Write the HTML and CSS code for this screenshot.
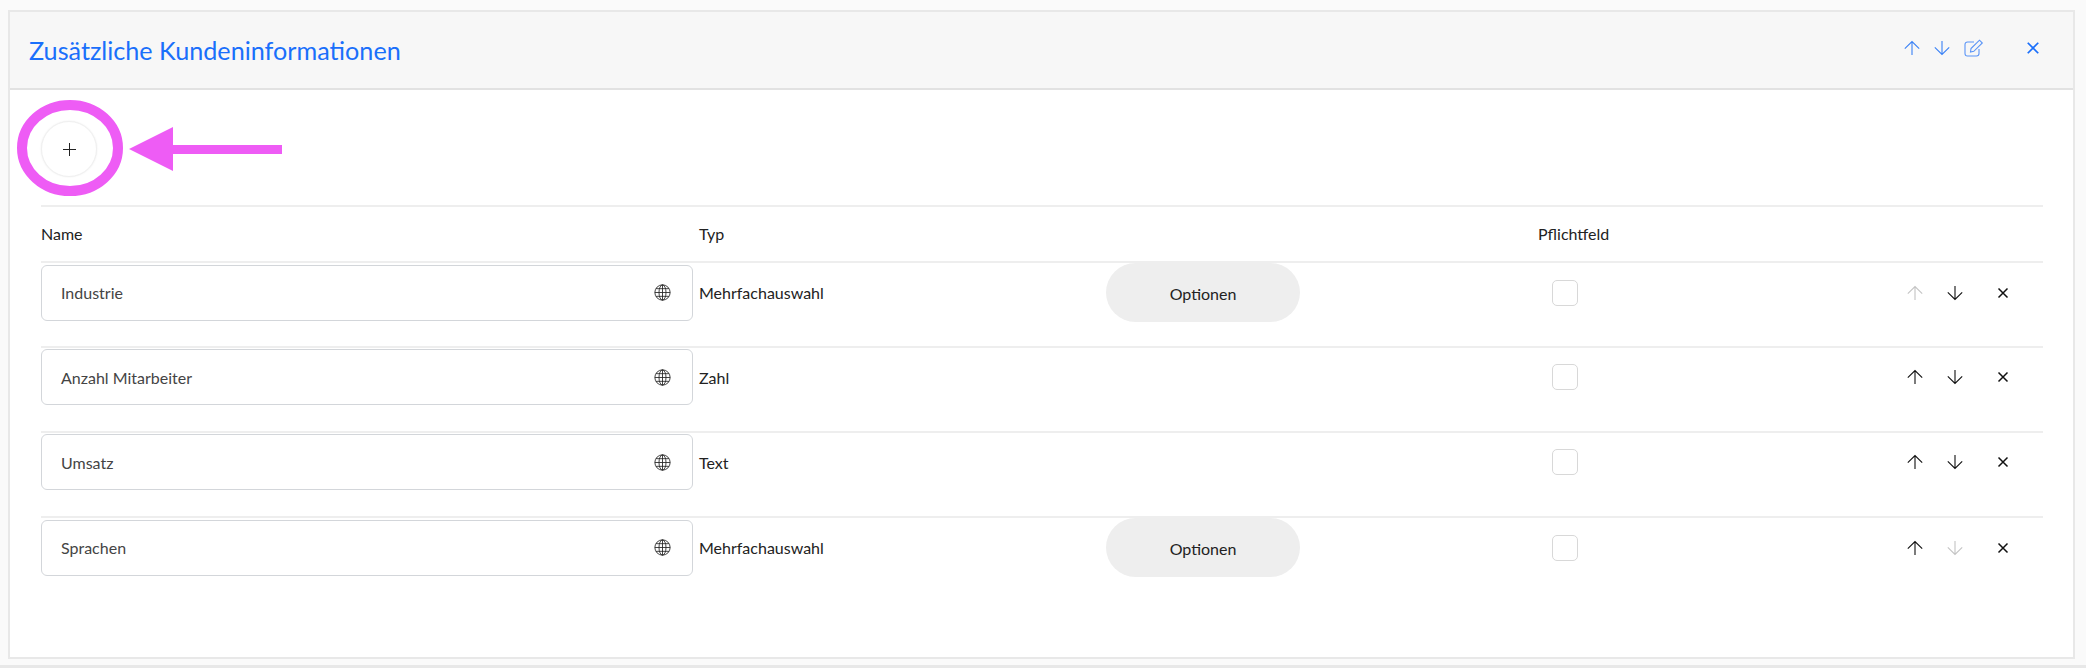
FILE: index.html
```html
<!DOCTYPE html>
<html lang="de">
<head>
    <meta charset="UTF-8">
    <title>Zusätzliche Kundeninformationen</title>
    <link rel="stylesheet" href="styles.css">
</head>
<body>
    <svg class="icon-defs" width="0" height="0">
        <symbol id="i-up" viewBox="0 0 16 16"><path d="M8 15V1.500M.8 8.700L8 1.500L15.200 8.700"/></symbol>
        <symbol id="i-down" viewBox="0 0 16 16"><path d="M8 1V14.500M.8 7.300L8 14.500L15.200 7.300"/></symbol>
        <symbol id="i-close" viewBox="0 0 12 12"><path d="M1.500 1.500L10.500 10.500M10.500 1.500L1.500 10.500"/></symbol>
        <symbol id="i-globe" viewBox="0 0 16 16"><circle cx="8" cy="8" r="7.200"/><ellipse cx="8" cy="8" rx="3.300" ry="7.200"/><path d="M8 .8V15.200M.8 8H15.200M1.800 4.400H14.200M1.800 11.600H14.200"/></symbol>
        <symbol id="i-edit" viewBox="0 0 20 18"><path d="M15 10V14.500A2.500 2.500 0 0 1 12.500 17H3.500A2.500 2.500 0 0 1 1 14.500V5.500A2.500 2.500 0 0 1 3.500 3H10"/><path d="M7 9.500L15.500 1.200L18.300 4L9.800 12.300L6.500 13Z"/></symbol>
    </svg>
    <div class="panel">
        <div class="panel-head">
            <h1>Zusätzliche Kundeninformationen</h1>
            <div class="head-actions">
                <svg class="icon head-arrow"><use href="#i-up"/></svg>
                <svg class="icon head-arrow"><use href="#i-down"/></svg>
                <svg class="icon head-edit"><use href="#i-edit"/></svg>
                <svg class="icon head-close"><use href="#i-close"/></svg>
            </div>
        </div>
        <div class="panel-body">
            <button class="add-btn"><span class="plus"></span></button>
            <div class="row row-head">
                <div>Name</div>
                <div>Typ</div>
                <div></div>
                <div>Pflichtfeld</div>
                <div></div>
            </div>
            <div class="row">
                <div class="name-field"><span>Industrie</span><svg class="icon globe"><use href="#i-globe"/></svg></div>
                <div>Mehrfachauswahl</div>
                <div><button class="options-btn">Optionen</button></div>
                <div><span class="check"></span></div>
                <div class="row-actions">
                    <svg class="icon arrow disabled"><use href="#i-up"/></svg>
                    <svg class="icon arrow"><use href="#i-down"/></svg>
                    <svg class="icon remove"><use href="#i-close"/></svg>
                </div>
            </div>
            <div class="row">
                <div class="name-field"><span>Anzahl Mitarbeiter</span><svg class="icon globe"><use href="#i-globe"/></svg></div>
                <div>Zahl</div>
                <div></div>
                <div><span class="check"></span></div>
                <div class="row-actions">
                    <svg class="icon arrow"><use href="#i-up"/></svg>
                    <svg class="icon arrow"><use href="#i-down"/></svg>
                    <svg class="icon remove"><use href="#i-close"/></svg>
                </div>
            </div>
            <div class="row">
                <div class="name-field"><span>Umsatz</span><svg class="icon globe"><use href="#i-globe"/></svg></div>
                <div>Text</div>
                <div></div>
                <div><span class="check"></span></div>
                <div class="row-actions">
                    <svg class="icon arrow"><use href="#i-up"/></svg>
                    <svg class="icon arrow"><use href="#i-down"/></svg>
                    <svg class="icon remove"><use href="#i-close"/></svg>
                </div>
            </div>
            <div class="row">
                <div class="name-field"><span>Sprachen</span><svg class="icon globe"><use href="#i-globe"/></svg></div>
                <div>Mehrfachauswahl</div>
                <div><button class="options-btn">Optionen</button></div>
                <div><span class="check"></span></div>
                <div class="row-actions">
                    <svg class="icon arrow"><use href="#i-up"/></svg>
                    <svg class="icon arrow disabled"><use href="#i-down"/></svg>
                    <svg class="icon remove"><use href="#i-close"/></svg>
                </div>
            </div>
        </div>
        <!-- pink annotation on top of the screenshot -->
        <svg class="annotation" width="280" height="100" viewBox="0 0 280 100">
            <ellipse cx="53" cy="48" rx="48" ry="43" class="ring"/>
            <path d="M112 49L156 27V45H265V54H156V71Z" class="pointer"/>
        </svg>
    </div>
    <div class="bottom-band"></div>
</body>
</html>
```

FILE: styles.css
```css
* {
    box-sizing: border-box;
}
body {
    margin: 0;
    height: 668px;
    overflow: hidden;
    position: relative;
    background-color: #fafafa;
    font-family: "Lato", "Open Sans", sans-serif;
    font-size: 16px;
    color: #222;
}
.icon-defs {
    display: block;
    height: 0;
}
.icon {
    fill: none;
    stroke: currentColor;
    stroke-width: 1.100;
    display: block;
    flex: none;
}
.panel {
    position: relative;
    margin: 10px 11px 0 8px;
    height: 649px;
    background-color: #fff;
    border: 2px solid #e8e8e8;
}
.panel-head {
    height: 78px;
    background-color: #f7f7f7;
    border-bottom: 2px solid #e2e2e2;
    display: flex;
    align-items: center;
    padding: 2px 33px 3px 19px;
    justify-content: space-between;
    color: #1a6ffb;
}
.panel-head h1 {
    margin: 0;
    font-size: 25.200px;
    font-weight: 400;
}
.head-actions {
    display: flex;
    align-items: center;
    color: #3b82f6;
    margin-top: -3px;
}
.head-arrow {
    width: 16px;
    height: 16px;
    margin-right: 14px;
}
.head-edit {
    width: 20px;
    height: 18px;
    margin-right: 42px;
    color: #5b95f7;
}
.head-close {
    width: 14px;
    height: 14px;
    stroke-width: 1.500;
    color: #1a6ffb;
}
.panel-body {
    padding: 31px 30px 0 31px;
}
.add-btn {
    display: flex;
    align-items: center;
    justify-content: center;
    width: 56px;
    height: 56px;
    padding: 0;
    border-radius: 50%;
    border: 1px solid #f0f0f0;
    background-color: #fff;
    box-shadow: 0 0 2px rgba(0, 0, 0, 0.08);
    margin-bottom: 28px;
}
.plus {
    width: 13px;
    height: 13px;
    background:
        linear-gradient(#222, #222) center / 13px 1px no-repeat,
        linear-gradient(#222, #222) center / 1px 13px no-repeat;
}
.row {
    display: grid;
    grid-template-columns: 658px 407px 446px 1fr 136px;
    align-items: center;
    height: 85px;
    padding: 0 0 25px;
    border-top: 2px solid #eee;
}
.row-head {
    height: 56px;
    padding: 0 0 2px;
}
.row-head > div:nth-child(4) {
    margin-left: -14px;
}
.name-field {
    display: flex;
    align-items: center;
    justify-content: space-between;
    width: 652px;
    height: 56px;
    padding: 0 21px 0 19px;
    border: 1px solid #d3d6da;
    border-radius: 6px;
    color: #444;
}
.globe {
    width: 17px;
    height: 17px;
    stroke-width: .8;
    color: #222;
}
.options-btn {
    display: block;
    width: 194px;
    height: 59px;
    border: none;
    border-radius: 30px;
    background-color: #eee;
    color: #222;
    font-family: inherit;
    font-size: 16px;
    padding: 2px 0 0;
}
.check {
    display: block;
    width: 26px;
    height: 26px;
    border: 1px solid #d8d8d8;
    border-radius: 5px;
}
.row-actions {
    display: flex;
    align-items: center;
    color: #111;
}
.arrow {
    width: 16px;
    height: 16px;
    margin-right: 24px;
}
.arrow.disabled {
    color: #c4c4c4;
}
.remove {
    width: 12px;
    height: 12px;
    margin-left: 10px;
    stroke-width: 1.500;
}
.annotation {
    position: absolute;
    left: 7px;
    top: 88px;
}
.ring {
    fill: none;
    stroke: #ee5cf5;
    stroke-width: 10;
}
.pointer {
    fill: #ee5cf5;
}
.bottom-band {
    position: absolute;
    left: 0;
    right: 0;
    bottom: 0;
    height: 3px;
    background-color: #e8e8e8;
}
```
